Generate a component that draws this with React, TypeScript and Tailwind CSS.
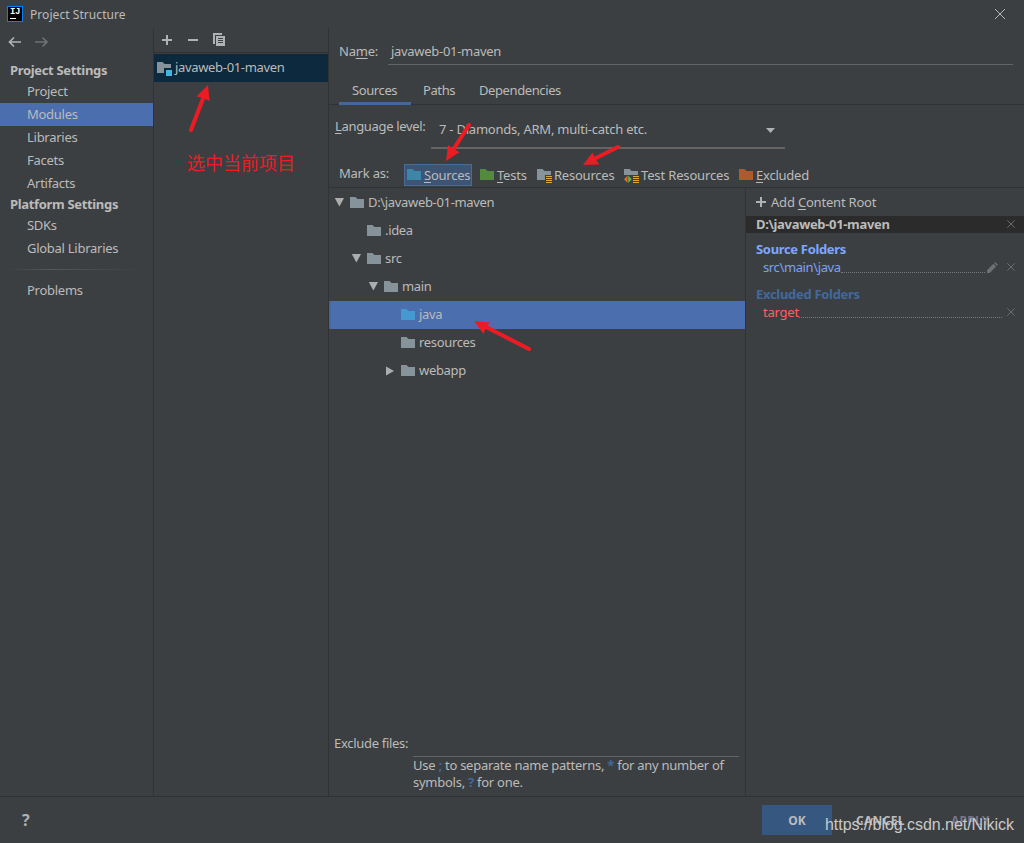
import type { ReactNode } from "react";
import clsx from "clsx";

type FolderProps = { color?: string; className?: string; children?: ReactNode };

function Folder({ color = "#87939a", className, children }: FolderProps) {
  return (
    <svg width="16" height="16" viewBox="0 0 16 16" className={clsx("shrink-0", className)}>
      <path fill={color} d="M1 2h5.5l2 2H15v9H1z" />
      {children}
    </svg>
  );
}

function ResourceLines() {
  return (
    <>
      <path fill="#3c3f41" d="M9 8h7v8H9z" />
      <path fill="#e0a63c" d="M10 9h6v1h-6zM10 11h6v1h-6zM10 13h6v1h-6zM10 15h6v1h-6z" />
    </>
  );
}

function Plus({ className }: { className?: string }) {
  return (
    <svg width="10" height="10" viewBox="0 0 10 10" className={clsx("shrink-0", className)}>
      <path fill="#afb1b3" d="M4 0h2v4h4v2H6v4H4V6H0V4h4z" />
    </svg>
  );
}

function Cross() {
  return (
    <svg width="8" height="8" viewBox="0 0 8 8" className="mb-px shrink-0">
      <path stroke="#6c6f71" d="M.3.3l7.4 7.4M7.7.3L.3 7.7" />
    </svg>
  );
}

function Key({ children }: { children: ReactNode }) {
  return <span className="underline decoration-1 underline-offset-2">{children}</span>;
}

function NavItem({ label, selected }: { label: string; selected?: boolean }) {
  return (
    <div className={clsx("flex h-[23px] items-center pl-[27px]", selected && "bg-[#4b6eaf]")}>{label}</div>
  );
}

const tree = [
  { name: "D:\\javaweb-01-maven", indent: "pl-[5px]", arrow: "down" },
  { name: ".idea", indent: "pl-[22px]" },
  { name: "src", indent: "pl-[22px]", arrow: "down" },
  { name: "main", indent: "pl-[39px]", arrow: "down" },
  { name: "java", indent: "pl-[54px]", selected: true },
  { name: "resources", indent: "pl-[56px]" },
  { name: "webapp", indent: "pl-[56px]", arrow: "right" },
];

function TreeArrow({ kind }: { kind?: string }) {
  return (
    <svg width="10" height="10" viewBox="0 0 10 10" className="mr-[5px] shrink-0">
      {kind === "down" && <path fill="#adadad" d="M.8 0h9.200L5.400 8.500z" />}
      {kind === "right" && <path fill="#adadad" d="M1 .5L9 5 1 9.500z" />}
    </svg>
  );
}

function Sidebar() {
  return (
    <nav className="w-[154px] shrink-0 border-r border-[#323232] tracking-[-0.27px]">
      <div className="flex h-[33px] gap-[13px] pt-[8px] pl-[8px]">
        <svg width="14" height="12" viewBox="0 0 14 12" fill="none" stroke="#afb1b3" strokeWidth="1.7">
          <path d="M13 6H1.5M6 1.5L1.5 6 6 10.5" />
        </svg>
        <svg width="14" height="12" viewBox="0 0 14 12" fill="none" stroke="#6e7072" strokeWidth="1.7">
          <path d="M0 6h12M7.500 1.500L12 6 7.500 10.500" />
        </svg>
      </div>
      <div className="flex h-[19px] items-center pl-[10px] font-bold tracking-[-0.33px]">Project Settings</div>
      <NavItem label="Project" />
      <NavItem label="Modules" selected />
      <NavItem label="Libraries" />
      <NavItem label="Facets" />
      <NavItem label="Artifacts" />
      <div className="flex h-[19px] items-center pl-[10px] font-bold tracking-[-0.33px]">Platform Settings</div>
      <NavItem label="SDKs" />
      <NavItem label="Global Libraries" />
      <div className="mx-[8px] mt-[9px] mb-[9px] h-px bg-linear-to-r from-transparent via-[#55585a] via-30% to-transparent" />
      <NavItem label="Problems" />
    </nav>
  );
}

function ModuleList() {
  return (
    <section className="w-[175px] shrink-0 border-r border-[#323232]">
      <div className="flex h-[25px] items-center border-b border-[#323232] pb-px pl-[8px]">
        <Plus />
        <div className="ml-[16px] h-[2px] w-[10px] bg-[#afb1b3]" />
        <svg width="12" height="13" viewBox="0 0 12 13" className="ml-[15px]">
          <path fill="#afb1b3" d="M0 0h9v2H2v9H0z" />
          <path fill="#afb1b3" d="M3 3h9v10H3z" />
          <path fill="#3c3f41" d="M5 5h5v1H5zM5 7h5v1H5zM5 9h5v1H5z" />
        </svg>
      </div>
      <div className="mt-px flex h-[28px] items-center bg-[#0d293e] pl-[2px]">
        <Folder>
          <path fill="#0d293e" d="M8 8h8v8H8z" />
          <path fill="#40b6e0" d="M10 10h6v6h-6z" />
        </Folder>
        <span className="ml-[3px] tracking-[-0.33px]">javaweb-01-maven</span>
      </div>
    </section>
  );
}

function MarkAs() {
  return (
    <div className="flex h-[23px] items-start pl-[10px]">
      <span className="w-[65px] leading-[19px]">Mark as:</span>
      <div className="flex h-[22px] w-[68px] items-center border border-[#466d94] bg-[#3d5475] pl-[1px]">
        <Folder color="#3e86a8" />
        <span className="ml-[2px] pt-[2px]"><Key>S</Key>ources</span>
      </div>
      <div className="flex h-[22px] items-center pl-[7px]">
        <Folder color="#548a3f" />
        <span className="ml-[2px] w-[39px] pt-[2px]"><Key>T</Key>ests</span>
        <Folder><ResourceLines /></Folder>
        <span className="ml-[2px] w-[69px] pt-[2px]">Resources</span>
        <Folder>
          <path fill="#3c3f41" d="M0 8h16v8H0z" />
          <ResourceLines />
          <path fill="#f26522" d="M4.500 8.500v7.500L1 12.250z" />
          <path fill="#62b543" d="M5.200 8.500v7.500l3.500-3.750z" />
        </Folder>
        <span className="ml-[2px] w-[97px] pt-[2px] tracking-[-0.15px] whitespace-nowrap">Test Resources</span>
        <Folder color="#ad5a2f" />
        <span className="ml-[2px] pt-[2px]"><Key>E</Key>xcluded</span>
      </div>
    </div>
  );
}

function ContentTree() {
  return (
    <div className="flex w-[417px] shrink-0 flex-col border-r border-[#323232] pt-px">
      {tree.map((row) => (
        <div
          key={row.name}
          className={clsx("flex h-[28px] items-center", row.indent, row.selected && "border-l-2 border-[#4169a0] bg-[#4b6eaf]")}
        >
          <TreeArrow kind={row.arrow} />
          <Folder color={row.selected ? "#4399d0" : undefined} />
          <span className="ml-[3px] tracking-[-0.33px]">{row.name}</span>
        </div>
      ))}
      <div className="mt-auto flex h-[61px] pl-[5px]">
        <span className="w-[80px] shrink-0 leading-[16px] tracking-[-0.3px]">Exclude files:</span>
        <div className="mt-[21px] mr-[6px] -ml-px h-[40px] grow border-t border-[#646464] leading-[17px] tracking-[-0.26px] whitespace-nowrap">
          <div>Use <b className="text-[#41699f]">;</b> to separate name patterns, <b className="text-[#41699f]">*</b> for any number of</div>
          <div>symbols, <b className="text-[#41699f]">?</b> for one.</div>
        </div>
      </div>
    </div>
  );
}

function Roots() {
  return (
    <div className="min-w-0 grow">
      <div className="flex h-[28px] items-center pl-[10px]">
        <Plus />
        <span className="ml-[5px] pt-px tracking-[-0.2px]">Add <Key>C</Key>ontent Root</span>
      </div>
      <div className="flex h-[17px] items-center justify-between bg-[#2b2b2b] pr-[9px] pl-[10px] font-bold tracking-[-0.33px]">
        D:\javaweb-01-maven
        <Cross />
      </div>
      <div className="mt-[8px] flex h-[17px] items-center pl-[10px] font-bold tracking-[-0.33px] text-[#7da7ff]">Source Folders</div>
      <div className="flex h-[19px] items-center pr-[9px] pl-[17px] tracking-[-0.38px] text-[#7da1f5]">
        src\main\java
        <span className="mt-[10px] h-px grow border-t border-dotted border-[#75787a]" />
        <svg width="11" height="11" viewBox="0 0 10 10" className="mr-[9px] mb-px ml-[2px]">
          <path fill="#6e7173" d="M0 10V7.500L5.800 1.700l2.500 2.500L2.500 10zM6.500 1L7.500 0 10 2.500l-1 1z" />
        </svg>
        <Cross />
      </div>
      <div className="mt-[9px] flex h-[17px] items-center pl-[10px] font-bold tracking-[-0.3px] text-[#41699f]">Excluded Folders</div>
      <div className="flex h-[19px] items-center pr-[9px] pl-[17px] text-[#ff5f5f]">
        target
        <span className="mt-[10px] mr-[5px] h-px grow border-t border-dotted border-[#75787a]" />
        <Cross />
      </div>
    </div>
  );
}

function Editor() {
  return (
    <main className="flex min-w-0 grow flex-col">
      <div className="flex h-[37px] pr-[11px] pl-[10px]">
        <span className="w-[49px] pt-[13px] leading-[20px]">Na<Key>m</Key>e:</span>
        <div className="grow border-b border-[#646464] pt-[13px] pl-[3px] leading-[20px] tracking-[-0.3px]">javaweb-01-maven</div>
      </div>
      <div className="mt-[12px] flex h-[28px] border-b border-[#323232] pl-[10px] leading-[27px]">
        <div className="h-[28px] w-[72px] border-b-3 border-[#41699f] pl-[13px] tracking-[-0.4px]">Sources</div>
        <div className="w-[56px] pl-[12px] tracking-[-0.4px]">Paths</div>
        <div className="pl-[12px] tracking-[-0.4px]">Dependencies</div>
      </div>
      <div className="flex h-[44px] pl-[6px]">
        <span className="w-[96px] pt-[11px] leading-[20px] tracking-[-0.33px]"><Key>L</Key>anguage level:</span>
        <div className="flex w-[354px] items-center justify-between border-b-2 border-[#646464] pt-[8px] pr-[10px] pl-[8px]">
          7 - Diamonds, ARM, multi-catch etc.
          <svg width="9" height="5" viewBox="0 0 9 5"><path fill="#afb1b3" d="M0 0h9L4.500 5z" /></svg>
        </div>
      </div>
      <div className="mt-[15px] border-b border-[#323232]">
        <MarkAs />
      </div>
      <div className="flex min-h-0 grow">
        <ContentTree />
        <Roots />
      </div>
    </main>
  );
}

function Annotations() {
  return (
    <div className="pointer-events-none absolute inset-0 font-['Liberation_Sans','Noto_Sans_CJK_SC',sans-serif] tracking-normal">
      <svg width="1024" height="843" viewBox="0 0 1024 843" fill="#ed1c24" stroke="#ed1c24" strokeLinecap="round">
        <path strokeWidth="4" d="M191 130L204 96M469 125L453 150M618 147L594 159M529 349L486 327" />
        <path stroke="none" d="M208 85L209.500 101 203.500 98 196.500 96.500zM446 161L448 145 453.500 149 459.500 152zM583 165L592.500 152.500 595 158.500 599.500 164.500zM474 321L490 322.500 486 327.500 483.500 334z" />
      </svg>
      <div className="absolute top-[152px] left-[187px] text-[18px] leading-[24px] text-[#ed1c24]">选中当前项目</div>
      <div className="absolute top-[815px] left-[825px] text-[16px] leading-[20px] tracking-[-0.05px] whitespace-nowrap text-[#c8c9ca]">https://blog.csdn.net/Nikick</div>
    </div>
  );
}

export default function App() {
  return (
    <div className="relative flex h-[843px] w-[1024px] flex-col overflow-hidden bg-[#3c3f41] font-['Noto_Sans','Noto_Sans_CJK_SC',sans-serif] text-[13px] tracking-[-0.23px] text-[#bbbbbb]">
      <header className="flex h-[28px] shrink-0 items-center pr-[19px] pl-[7px]">
        <div className="flex h-[16px] w-[16px] flex-col border border-[#087cfa] bg-black pl-[2px] font-['Liberation_Mono',monospace] text-[9px] leading-[10px] font-bold tracking-[-0.5px] text-white">
          IJ
          <span className="mt-[1px] h-px w-[6px] bg-white" />
        </div>
        <span className="ml-[7px] grow pt-[2px] text-[12px] tracking-[0.06px]">Project Structure</span>
        <svg width="10" height="10" viewBox="0 0 10 10"><path stroke="#b5b5b5" d="M0 0l10 10M10 0L0 10" /></svg>
      </header>
      <div className="flex h-[769px] shrink-0 border-b border-[#323232]">
        <Sidebar />
        <ModuleList />
        <Editor />
      </div>
      <footer className="flex grow items-center pl-[21px] font-bold">
        <span className="w-[741px] pl-px text-[16px] text-[#afb1b3]">?</span>
        <button className="mb-px h-[30px] w-[70px] bg-[#365880] pt-[2px] text-[12px] tracking-normal">OK</button>
        <span className="ml-[24px] w-[95px] pt-[2px] text-[12px] tracking-[0.3px]">CANCEL</span>
        <span className="pt-[2px] text-[12px] tracking-[0.3px] text-[#77748a]">APPLY</span>
      </footer>
      <Annotations />
    </div>
  );
}
